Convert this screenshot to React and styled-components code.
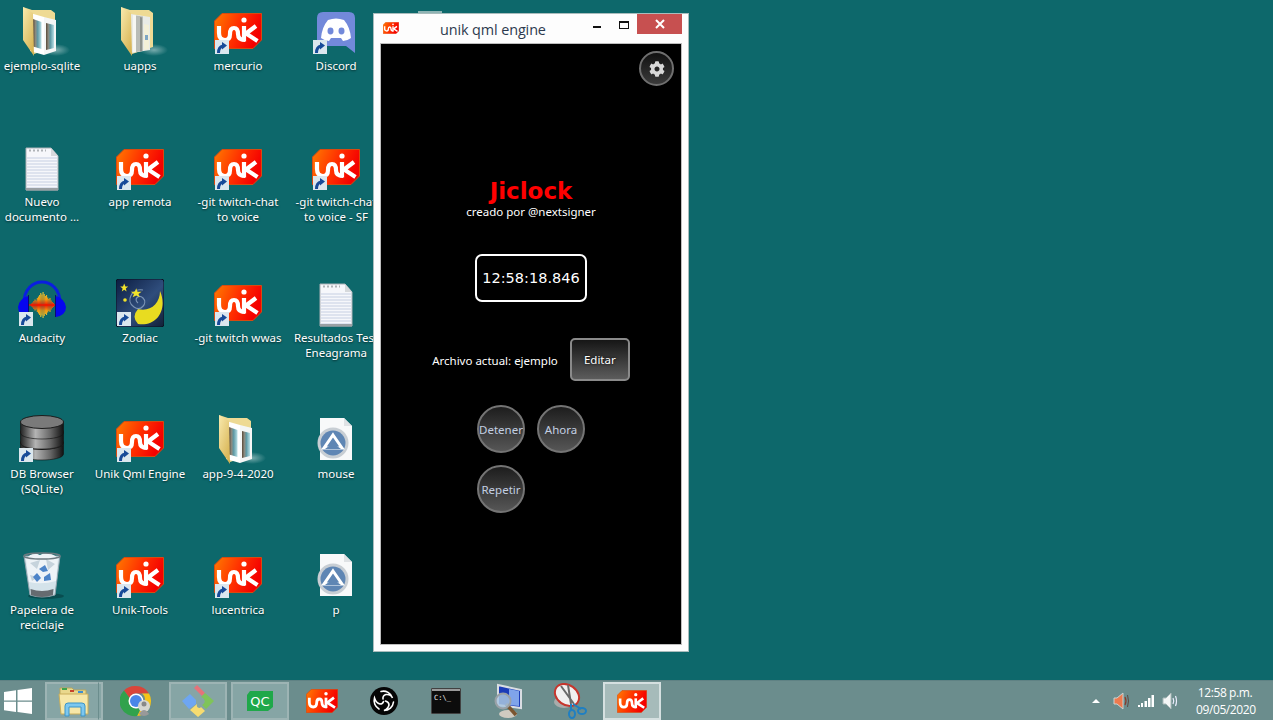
import styled, { createGlobalStyle } from "styled-components";
import { FaCog } from "react-icons/fa";

const Global = createGlobalStyle`
  html, body { margin: 0; padding: 0; background: #0d686b; overflow: hidden; }
  * { box-sizing: border-box; }
`;

const Screen = styled.div`
  position: relative;
  width: 1273px;
  height: 720px;
  display: flex;
  flex-direction: column;
  overflow: hidden;
  background: #0d686b;
  font-family: "Noto Sans", "Open Sans", sans-serif;
`;

// desktop icons
const Desktop = styled.div`
  flex: 1;
  display: grid;
  grid-auto-flow: column;
  grid-template-rows: repeat(5, 136px);
  grid-auto-columns: 98px;
  margin-left: -7px;
  min-height: 0;
`;
const Cell = styled.div`
  display: flex;
  flex-direction: column;
  align-items: center;
  padding-top: 7px;
`;
const IconBox = styled.div`
  position: relative;
  width: 48px;
  height: 48px;
  svg { display: block; }
`;
const Badge = styled.svg`
  position: absolute;
  left: 1px;
  top: 33px;
`;
const Label = styled.div`
  margin-top: 3px;
  width: 98px;
  font-size: 11.5px;
  line-height: 15px;
  color: #fff;
  text-align: center;
  white-space: pre;
  text-shadow: 0 1px 2px rgba(0, 0, 0, 0.6);
`;

// window
const BackTab = styled.div`
  position: absolute;
  left: 418px;
  top: 11px;
  width: 24px;
  height: 3px;
  background: #8fb4b4;
`;
const Window = styled.div`
  position: absolute;
  left: 373px;
  top: 13px;
  width: 316px;
  height: 639px;
  display: flex;
  flex-direction: column;
  background: #fdfdfd;
  border: 1px solid #a9bcbc;
  padding: 0 6px 6px;
`;
const TitleBar = styled.div`
  height: 29px;
  flex: none;
  display: flex;
  align-items: flex-start;
`;
const WinLogo = styled.div`
  margin: 8px 0 0 3px;
  width: 16px;
  height: 12px;
  svg { display: block; }
`;
const WinTitle = styled.div`
  margin: 6px 0 0 41px;
  font-size: 14.4px;
  line-height: 19px;
  color: #2c3a4e;
  font-family: "Open Sans", sans-serif;
  letter-spacing: -0.1px;
`;
const WinButtons = styled.div`
  margin-left: auto;
  display: flex;
  align-items: flex-start;
`;
const MinBtn = styled.div`
  width: 8px;
  height: 2px;
  background: #111;
  margin: 12px 18px 0 0;
`;
const MaxBtn = styled.div`
  width: 10px;
  height: 8px;
  border: 1px solid #111;
  border-top-width: 2px;
  margin: 7px 8px 0 0;
`;
const CloseBtn = styled.div`
  width: 45px;
  height: 20px;
  background: #c75050;
  display: flex;
  align-items: center;
  justify-content: center;
`;
const Client = styled.div`
  flex: 1;
  background: #000;
  border: 1px solid #bdbdbd;
  display: flex;
  flex-direction: column;
  align-items: center;
  font-family: "Noto Sans", sans-serif;
`;
const GearButton = styled.div`
  align-self: flex-end;
  width: 35px;
  height: 35px;
  margin: 7px 7px 0 0;
  border-radius: 50%;
  border: 2px solid #6f6f6f;
  background: linear-gradient(#111, #3a3a3a);
  color: #d8d8d8;
  display: flex;
  align-items: center;
  justify-content: center;
`;
const AppTitle = styled.div`
  margin-top: 92px;
  font-family: "DejaVu Sans", sans-serif;
  font-size: 23px;
  line-height: 26px;
  font-weight: 700;
  color: #f00;
`;
const Author = styled.div`
  margin-top: 1px;
  font-size: 11.5px;
  line-height: 14px;
  color: #fff;
`;
const ClockBox = styled.div`
  margin-top: 35px;
  width: 112px;
  height: 48px;
  border: 2px solid #fff;
  border-radius: 7px;
  display: flex;
  align-items: center;
  justify-content: center;
  font-family: "DejaVu Sans", sans-serif;
  font-size: 14.5px;
  color: #fff;
`;
const FileRow = styled.div`
  margin-top: 36px;
  display: flex;
  align-items: center;
  gap: 12px;
`;
const FileText = styled.div`
  font-size: 11.5px;
  color: #fff;
  padding-top: 2px;
`;
const EditButton = styled.div`
  width: 60px;
  height: 43px;
  border: 2px solid #8a8a8a;
  border-radius: 5px;
  background: linear-gradient(#161616, #5c5c5c);
  color: #fff;
  font-size: 11.5px;
  display: flex;
  align-items: center;
  justify-content: center;
  text-shadow: 0 0 3px #000;
`;
const RoundGrid = styled.div`
  margin-top: 24px;
  display: grid;
  grid-template-columns: repeat(2, 48px);
  gap: 12px;
`;
const RoundButton = styled.div`
  width: 48px;
  height: 48px;
  border-radius: 50%;
  border: 2px solid #747474;
  background: linear-gradient(#1d1d1d, #565656);
  color: #c3cfe2;
  font-size: 11.5px;
  display: flex;
  align-items: center;
  justify-content: center;
`;

// taskbar
const Taskbar = styled.div`
  flex: none;
  height: 40px;
  display: flex;
  align-items: flex-start;
  padding-top: 1px;
  background: #6b8d8d;
  border-top: 1px solid #5f8284;
`;
const StartArea = styled.div`
  width: 45px;
  height: 38px;
  flex: none;
  display: flex;
  align-items: center;
  padding-left: 4px;
`;
const TaskSlots = styled.div`
  display: flex;
  gap: 4px;
`;
const TaskButton = styled.div`
  position: relative;
  width: 58px;
  height: 38px;
  display: flex;
  align-items: center;
  justify-content: center;
  border: ${(p) => (p.$state === "none" ? "2px solid transparent" : p.$state === "active" ? "2px solid #d5e0e0" : "2px solid #9db4b4")};
  background: ${(p) => (p.$state === "none" ? "transparent" : p.$state === "active" ? "#a6bbba" : "#86a5a5")};
`;
const StackEdge = styled.div`
  position: absolute;
  right: -2px;
  top: -2px;
  bottom: -2px;
  width: 5px;
  border-left: 1px solid #6b8d8d;
  border-right: 1px solid #9db4b4;
  border-top: 1px solid #9db4b4;
  border-bottom: 1px solid #9db4b4;
`;
const Tray = styled.div`
  margin-left: auto;
  height: 38px;
  display: flex;
  align-items: center;
  padding-right: 19px;
  svg { display: block; flex: none; }
`;
const ClockText = styled.div`
  margin-left: 18px;
  width: 58px;
  text-align: center;
  color: #fff;
  font-size: 12px;
  line-height: 17px;
  white-space: nowrap;
  font-family: "Open Sans", sans-serif;
  letter-spacing: -0.4px;
`;
const Caret = styled.div`
  width: 0;
  height: 0;
  border-left: 4px solid transparent;
  border-right: 4px solid transparent;
  border-bottom: 4px solid #fff;
  margin-right: 13px;
`;

function Unik({ width = 48, height = 36, id = "u" }) {
  return (
    <svg width={width} height={height} viewBox="0 0 48 36">
      <defs>
        <linearGradient id={id} x1="0" y1="0" x2="1" y2="0.3">
          <stop offset="0" stopColor="#ff7a00" />
          <stop offset="0.55" stopColor="#ff3000" />
          <stop offset="1" stopColor="#f40000" />
        </linearGradient>
      </defs>
      <path d="M8 .5H47.5V27L39 35.5H.5V8Z" fill={`url(#${id})`} stroke="#d84a10" />
      <g fill="none" stroke="#fff" strokeWidth="4.2">
        <path d="M5 13V20Q5 27 11 27Q16 27 16 21Q16 15 20 15Q24 15 24 21Q24 27 31 27" />
        <path d="M30 13V28.500" />
        <path d="M42 13L32 20.500L43.500 28" />
      </g>
      <circle cx="30" cy="7" r="2.6" fill="#fff" />
    </svg>
  );
}

function ShortcutBadge() {
  return (
    <Badge width="14" height="14" viewBox="0 0 14 14">
      <rect width="14" height="14" fill="#dbe7ee" />
      <path d="M3.500 13C3.500 8 5.500 6.500 8 6" fill="none" stroke="#174a98" strokeWidth="3" />
      <path d="M7 2L12 5.500L7 9.500Z" fill="#174a98" />
    </Badge>
  );
}

function Folder({ papers, id }) {
  return (
    <svg width="62" height="50" viewBox="0 0 62 50">
      <defs>
        <linearGradient id={id + "f"} x1="0" y1="0" x2="0.7" y2="1">
          <stop offset="0" stopColor="#f9eaae" />
          <stop offset="1" stopColor="#d8b555" />
        </linearGradient>
        <linearGradient id={id + "p"} x1="0" y1="0" x2="1" y2="0">
          <stop offset="0" stopColor="#5b4a38" />
          <stop offset="0.3" stopColor="#8a8a80" />
          <stop offset="0.55" stopColor="#5f9aa6" />
          <stop offset="1" stopColor="#b9e0e6" />
        </linearGradient>
        <radialGradient id={id + "s"}>
          <stop offset="0" stopColor="#cfe3e3" stopOpacity=".55" />
          <stop offset="1" stopColor="#cfe3e3" stopOpacity="0" />
        </radialGradient>
      </defs>
      <ellipse cx="38" cy="43" rx="14" ry="6" fill={`url(#${id}s)`} />
      <path d="M5 0L14 3H33L37 6V40L16 47Z" fill="#eeda94" />
      {papers ? (
        <g>
          <path d="M15 7L34 10V43L15 46Z" fill="#e9ebe6" />
          <path d="M17 8L20 8.500V45L17 45.500Z" fill="#f7f7f2" />
          <path d="M20 8.500L27 9.500V44L20 45Z" fill="#b9bcb6" />
          <path d="M24 10L26 10.500V44L24 44.500Z" fill="#8f938e" />
          <path d="M28 17L33 18V42L28 43Z" fill="#f4f0d8" />
          <path d="M29 28H32V33H29Z" fill="#7fa6c4" />
        </g>
      ) : (
        <g>
          <path d="M12 6L26 10V48L12 44Z" fill="#fff" />
          <path d="M15 12L23.500 15V42L15 39.500Z" fill={`url(#${id}p)`} />
          <path d="M26 10L38 13V44L26 48Z" fill="#f4f6f6" />
          <path d="M28 16L36 18V41L28 43Z" fill={`url(#${id}p)`} />
        </g>
      )}
      <path d="M5 0L15 6L16 49L5 33Z" fill={`url(#${id}f)`} />
    </svg>
  );
}

function Page() {
  const rows = [];
  for (let y = 15; y < 46; y += 3) rows.push(y);
  return (
    <svg width="48" height="48" viewBox="0 0 48 48">
      <path d="M8 5H33L40 13V47H8Z" fill="#f6f7fb" stroke="#a9b0b6" />
      <path d="M33 5V13H40Z" fill="#d6d9dc" />
      {rows.map((y) => <path key={y} d={`M9 ${y}H39`} stroke="#c6cfe2" />)}
      <path d="M11 7.500H28" stroke="#b0b4b8" strokeDasharray="2 2" strokeWidth="2" />
      <rect x="8" y="45" width="32" height="2.500" fill="#9aa0a4" />
    </svg>
  );
}

function AppFile() {
  return (
    <svg width="48" height="48" viewBox="0 0 48 48">
      <path d="M8 3H32L40 11V45H8Z" fill="#f8f9fa" />
      <path d="M32 3V11H40Z" fill="#dfe2e5" />
      <circle cx="21" cy="28" r="15.500" fill="#c8ced4" />
      <circle cx="21" cy="28" r="12.500" fill="#5f86b4" />
      <path d="M21 20L30 33H12Z" fill="none" stroke="#fff" strokeWidth="3" />
      <path d="M13 34L21 28L29 34Z" fill="#5f86b4" />
    </svg>
  );
}

function Discord() {
  return (
    <svg width="48" height="48" viewBox="0 0 48 48">
      <path d="M11 5H37Q43 5 43 11V46L34 39H11Q5 39 5 33V11Q5 5 11 5Z" fill="#7289da" />
      <path d="M16 13Q24 10 32 13Q38 20 39 31Q35 34 31 34L29 31H19L17 34Q13 34 9 31Q10 20 16 13Z" fill="#fff" />
      <ellipse cx="18.500" cy="24" rx="3" ry="3.400" fill="#7289da" />
      <ellipse cx="29.500" cy="24" rx="3" ry="3.400" fill="#7289da" />
    </svg>
  );
}

const waveHeights = [3, 5, 8, 11, 9, 14, 17, 20, 24, 21, 26, 22, 18, 20, 15, 12, 14, 9, 6, 4];

function Audacity() {
  return (
    <svg width="48" height="48" viewBox="0 0 48 48">
      <defs>
        <linearGradient id="wave" gradientUnits="userSpaceOnUse" x1="0" y1="12" x2="0" y2="40">
          <stop offset="0" stopColor="#d8d040" />
          <stop offset="0.3" stopColor="#f59a10" />
          <stop offset="0.5" stopColor="#f01800" />
          <stop offset="0.7" stopColor="#f59a10" />
          <stop offset="1" stopColor="#d8d040" />
        </linearGradient>
      </defs>
      <path d="M6 24C6 -4 42 -4 42 24" fill="none" stroke="#0a1ee0" strokeWidth="3" />
      <path d="M10 17V38Q0 36 0 28Q1 20 10 17Z" fill="#0606ee" />
      <path d="M38 17V38Q48 36 48 28Q47 20 38 17Z" fill="#0606ee" />
      <path d="M10.500 16V38M37.500 16V38" stroke="#0a0a70" />
      {waveHeights.map((h, i) => (
        <rect key={i} x={13 + i * 1.15} y={26 - h / 2} width="1.150" height={h} fill="url(#wave)" />
      ))}
      <path d="M11 26H37" stroke="#f01800" strokeWidth="1.500" />
    </svg>
  );
}

function Zodiac() {
  return (
    <svg width="48" height="48" viewBox="0 0 48 48">
      <defs>
        <linearGradient id="night" x1="0" y1="0" x2="1" y2="1">
          <stop offset="0" stopColor="#0b1c40" />
          <stop offset="0.55" stopColor="#2f4d7c" />
          <stop offset="1" stopColor="#122036" />
        </linearGradient>
      </defs>
      <rect width="48" height="48" rx="3" fill="url(#night)" stroke="#0a1222" />
      <path d="M22 45C41 48 52 30 44 12C44 25 34 33 22 30Q15 38 22 45Z" fill="#e8dc20" />
      <path d="M22 24C17 20 23 15 27 19C32 24 25 33 18 28C9 22 16 9 27 11" fill="none" stroke="#7c94b4" strokeWidth="1.200" />
      <path d="M9 3L10.500 7H14L11 9.500L12 13L9 11L6 13L7 9.500L4 7H7.500Z" fill="#f2e32a" transform="translate(1 2) scale(.8)" />
      <path d="M18 8L19.500 12H24L20.500 14.500L22 18L18 16L14 18L15.500 14.500L12 12H16.500Z" fill="#f2e32a" transform="translate(4 2) scale(.9)" />
      <circle cx="9" cy="21" r="1.800" fill="#f2e32a" />
    </svg>
  );
}

function DbBrowser() {
  const disc = (y) => (
    <g key={y}>
      <path d={`M2.500 ${y}V${y + 11}C3 ${y + 19} 45 ${y + 19} 45.500 ${y + 11}V${y}Z`} fill="url(#drum)" stroke="#111" strokeWidth=".6" />
      <ellipse cx="24" cy={y} rx="21.500" ry="6.500" fill="#7a7a7a" stroke="#1c1c1c" />
    </g>
  );
  return (
    <svg width="48" height="48" viewBox="0 0 48 48">
      <defs>
        <linearGradient id="drum" x1="0" y1="0" x2="1" y2="0">
          <stop offset="0" stopColor="#222" />
          <stop offset="0.35" stopColor="#b4b4b4" />
          <stop offset="0.7" stopColor="#666" />
          <stop offset="1" stopColor="#111" />
        </linearGradient>
      </defs>
      {[28, 17, 7].map(disc)}
    </svg>
  );
}

function RecycleBin() {
  return (
    <svg width="48" height="48" viewBox="0 0 48 48">
      <ellipse cx="28" cy="45" rx="18" ry="3" fill="#053c3e" opacity=".6" />
      <path d="M6 5H42L37 44Q24 48 12 44Z" fill="#d4e3ea" stroke="#8fa2ac" />
      <path d="M8 8Q14 0 22 4Q30 -1 40 7L38 30Q24 34 11 31Z" fill="#eef3f7" />
      <path d="M12 12L22 9L19 18ZM28 8L37 13L30 19ZM12 24L20 26L14 30Z" fill="#c6d3dc" />
      <path d="M12.500 38Q24 42 35.500 38L35 44Q24 48 13 44Z" fill="#666b70" />
      <ellipse cx="24" cy="5" rx="18" ry="3" fill="none" stroke="#6d7a80" strokeWidth="1.500" />
      <path d="M21 18L27 14L30 20L25 21ZM32 22L33 29L26 30V26ZM19 22L23 27L19 31L15 26Z" fill="#4d84c8" />
    </svg>
  );
}

const icons = [
  { label: "ejemplo-sqlite", art: <Folder id="a" /> },
  { label: "Nuevo\ndocumento ...", art: <Page /> },
  { label: "Audacity", art: <Audacity />, link: true },
  { label: "DB Browser\n(SQLite)", art: <DbBrowser />, link: true },
  { label: "Papelera de\nreciclaje", art: <RecycleBin /> },
  { label: "uapps", art: <Folder id="b" papers /> },
  { label: "app remota", unik: true, link: true },
  { label: "Zodiac", art: <Zodiac />, link: true },
  { label: "Unik Qml Engine", unik: true, link: true },
  { label: "Unik-Tools", unik: true, link: true },
  { label: "mercurio", unik: true, link: true },
  { label: "-git twitch-chat\nto voice", unik: true, link: true },
  { label: "-git twitch wwas", unik: true, link: true },
  { label: "app-9-4-2020", art: <Folder id="c" /> },
  { label: "lucentrica", unik: true, link: true },
  { label: "Discord", art: <Discord />, link: true },
  { label: "-git twitch-chat\nto voice - SF", unik: true, link: true },
  { label: "Resultados Test\nEneagrama", art: <Page /> },
  { label: "mouse", art: <AppFile /> },
  { label: "p", art: <AppFile /> },
];

const UnikFrame = styled.div`
  padding-top: 6px;
`;

function Windows() {
  return (
    <svg width="28" height="26" viewBox="0 0 28 26">
      <path d="M0 4L12 2.200V12.400H0ZM13.500 2L28 0V12.400H13.500ZM0 13.800H12V24L0 22.200ZM13.500 13.800H28V26L13.500 24Z" fill="#fff" />
    </svg>
  );
}

function ExplorerIcon() {
  return (
    <svg width="32" height="32" viewBox="0 0 32 32">
      <path d="M2 3H14L16 5H28V12H2Z" fill="#e9d88d" stroke="#b9a55c" />
      <path d="M4 3H9V5H4Z" fill="#3fa34d" />
      <path d="M12 5H16V7H12Z" fill="#c8442c" />
      <path d="M20 6H25V8H20Z" fill="#3d8fd1" />
      <path d="M1 9H30V29H3Z" fill="#f6e7a8" stroke="#c9ae5a" />
      <path d="M7 31V21Q7 18 10 18H24Q27 18 27 21V31H23V22H11V31Z" fill="#7cc7ef" stroke="#3b94c9" />
    </svg>
  );
}

function Chrome() {
  return (
    <svg width="32" height="32" viewBox="0 0 32 32">
      <path d="M16 1A15 15 0 0 1 29 8.500H16A7 7 0 0 0 9.500 13L4 5.500A15 15 0 0 1 16 1Z" fill="#d9453a" />
      <path d="M29 8.500A15 15 0 0 1 17 31L23 19A7 7 0 0 0 22 8.500Z" fill="#f5c518" />
      <path d="M4 5.500A15 15 0 0 0 17 31L23 19A7 7 0 0 1 9.500 13Z" fill="#31a24c" />
      <circle cx="16" cy="16" r="7.500" fill="#fff" />
      <circle cx="16" cy="16" r="6" fill="#4a86e8" />
      <circle cx="24" cy="21" r="6" fill="#d6d6d0" />
      <circle cx="24" cy="19" r="2.500" fill="#888" />
      <path d="M19 29Q24 21 29 29Q24 33 19 29Z" fill="#999" />
    </svg>
  );
}

function Kraken() {
  return (
    <svg width="34" height="34" viewBox="0 0 34 34">
      <path d="M16 1L24 9L21 12L13 4Z" fill="#e5737a" />
      <path d="M24 9L33 17L25 25L21 21Q26 18 22 14L20 13Z" fill="#7fc45a" />
      <path d="M9 10L15 16V20L8 25L1 17Z" fill="#6ea6f2" />
      <path d="M9 26L16 20Q15 24 19 24L20 23L24 27L17 33Z" fill="#f7dc70" />
    </svg>
  );
}

function QtCreator() {
  return (
    <svg width="28" height="22" viewBox="0 0 28 22">
      <path d="M4 1H27V17L22 21H1V5Z" fill="#1fa84a" />
      <text x="14" y="16" textAnchor="middle" fontFamily="DejaVu Sans" fontSize="13" fill="#fff">QC</text>
    </svg>
  );
}

function Obs() {
  return (
    <svg width="28" height="28" viewBox="0 0 28 28">
      <circle cx="14" cy="14" r="14" fill="#050505" />
      <g fill="none" stroke="#fff" strokeWidth="1.600" strokeLinecap="round">
        <path d="M11 4.500A9.500 9.500 0 0 1 22.500 11Q21 7 16 7.500Q12.500 8.500 13 12" />
        <path d="M23.500 15A9.500 9.500 0 0 1 14 23.500Q18 22 19 18Q19 15 15.500 14" />
        <path d="M9 22A9.500 9.500 0 0 1 4.500 11Q6 16 10 17Q13 17 13.500 14.500" />
      </g>
    </svg>
  );
}

function Cmd() {
  return (
    <svg width="30" height="26" viewBox="0 0 30 26">
      <rect x="0" y="0" width="30" height="26" fill="#0c0c0c" stroke="#777" />
      <rect x="1" y="1" width="28" height="2" fill="#9a9a9a" />
      <text x="3" y="12" fontFamily="DejaVu Sans Mono" fontSize="7" fill="#eee">C:\_</text>
    </svg>
  );
}

function Monitor() {
  return (
    <svg width="34" height="36" viewBox="0 0 34 36">
      <path d="M7 2L30 7V25L7 22Z" fill="#1c3cb8" stroke="#d9dde2" strokeWidth="2" />
      <path d="M18 6L28 8V23L18 22Z" fill="#7fa4ea" />
      <ellipse cx="17" cy="31" rx="9" ry="4" fill="#cfcac0" />
      <path d="M15 21L25 32" stroke="#7a5530" strokeWidth="3.500" />
      <circle cx="12" cy="18" r="7.500" fill="#a9c6de" fillOpacity=".85" stroke="#9aa1a6" strokeWidth="2" />
    </svg>
  );
}

function Scissors() {
  return (
    <svg width="34" height="36" viewBox="0 0 34 36">
      <ellipse cx="11" cy="19" rx="10" ry="6" fill="#a9acab" />
      <ellipse cx="14" cy="12" rx="13" ry="10" transform="rotate(35 14 12)" fill="#f1f0f0" stroke="#c6362d" strokeWidth="2" />
      <path d="M8 3L21 21M15 2L18 21" stroke="#6a6a6a" strokeWidth="2" />
      <path d="M20 21L28 26M18 21L18 27" stroke="#1f7fc2" strokeWidth="2" />
      <ellipse cx="29" cy="28" rx="4" ry="3" fill="none" stroke="#1f7fc2" strokeWidth="2" />
      <ellipse cx="19" cy="31" rx="3" ry="4" fill="none" stroke="#1f7fc2" strokeWidth="2" />
    </svg>
  );
}

const SpeakerRedIcon = styled.svg`
  margin-right: 9px;
`;
const SignalIcon = styled.svg`
  margin-right: 8px;
`;

function SpeakerRed() {
  return (
    <SpeakerRedIcon width="16" height="18" viewBox="0 0 16 18">
      <path d="M1 6H4L10 1V17L4 12H1Z" fill="#ee7a4e" stroke="#c9d4d4" />
      <path d="M12 5Q14 9 12 13" fill="none" stroke="#8b3a2a" strokeWidth="1.200" />
      <path d="M14.500 3Q16.500 9 14.500 15" fill="none" stroke="#5d4a45" />
    </SpeakerRedIcon>
  );
}

function Signal() {
  return (
    <SignalIcon width="16" height="12" viewBox="0 0 16 12">
      <path d="M0 10H2V12H0ZM3 8H5V12H3ZM6.500 6H9V12H6.500Z" fill="#fff" />
      <path d="M10 3H12.500V12H10ZM13.500 0H16V12H13.500Z" fill="#fff" />
    </SignalIcon>
  );
}

function SpeakerWhite() {
  return (
    <svg width="16" height="18" viewBox="0 0 16 18">
      <path d="M1 6H4L9 1V17L4 12H1Z" fill="#f4f6f6" stroke="#a9b9b9" />
      <path d="M11 6Q12.500 9 11 12" fill="none" stroke="#eef" strokeWidth="1.200" />
      <path d="M13.500 4Q15.500 9 13.500 14" fill="none" stroke="#eef" strokeWidth="1.200" />
    </svg>
  );
}

const tasks = [
  { state: "none", art: <Chrome /> },
  { state: "open", art: <Kraken /> },
  { state: "open", art: <QtCreator /> },
  { state: "none", art: <Unik width={32} height={24} id="t1" /> },
  { state: "none", art: <Obs /> },
  { state: "none", art: <Cmd /> },
  { state: "none", art: <Monitor /> },
  { state: "none", art: <Scissors /> },
  { state: "active", art: <Unik width={30} height={23} id="t2" /> },
];

export default function App() {
  return (
    <Screen>
      <Global />
      <Desktop>
        {icons.map((it, i) => (
          <Cell key={i}>
            <IconBox>
              {it.unik ? (
                <UnikFrame>
                  <Unik id={"d" + i} />
                </UnikFrame>
              ) : (
                it.art
              )}
              {it.link && <ShortcutBadge />}
            </IconBox>
            <Label>{it.label}</Label>
          </Cell>
        ))}
      </Desktop>

      <BackTab />
      <Window>
        <TitleBar>
          <WinLogo>
            <Unik width={16} height={12} id="w" />
          </WinLogo>
          <WinTitle>unik qml engine</WinTitle>
          <WinButtons>
            <MinBtn />
            <MaxBtn />
            <CloseBtn>
              <svg width="10" height="10" viewBox="0 0 10 10">
                <path d="M1 1L9 9M9 1L1 9" stroke="#fff" strokeWidth="2" />
              </svg>
            </CloseBtn>
          </WinButtons>
        </TitleBar>
        <Client>
          <GearButton>
            <FaCog size={16} />
          </GearButton>
          <AppTitle>Jiclock</AppTitle>
          <Author>creado por @nextsigner</Author>
          <ClockBox>12:58:18.846</ClockBox>
          <FileRow>
            <FileText>Archivo actual: ejemplo</FileText>
            <EditButton>Editar</EditButton>
          </FileRow>
          <RoundGrid>
            <RoundButton>Detener</RoundButton>
            <RoundButton>Ahora</RoundButton>
            <RoundButton>Repetir</RoundButton>
          </RoundGrid>
        </Client>
      </Window>

      <Taskbar>
        <StartArea>
          <Windows />
        </StartArea>
        <TaskSlots>
          <TaskButton $state="open">
            <ExplorerIcon />
            <StackEdge />
          </TaskButton>
          {tasks.map((t, i) => (
            <TaskButton key={i} $state={t.state}>
              {t.art}
            </TaskButton>
          ))}
        </TaskSlots>
        <Tray>
          <Caret />
          <SpeakerRed />
          <Signal />
          <SpeakerWhite />
          <ClockText>
            12:58 p.m.
            <br />
            09/05/2020
          </ClockText>
        </Tray>
      </Taskbar>
    </Screen>
  );
}
